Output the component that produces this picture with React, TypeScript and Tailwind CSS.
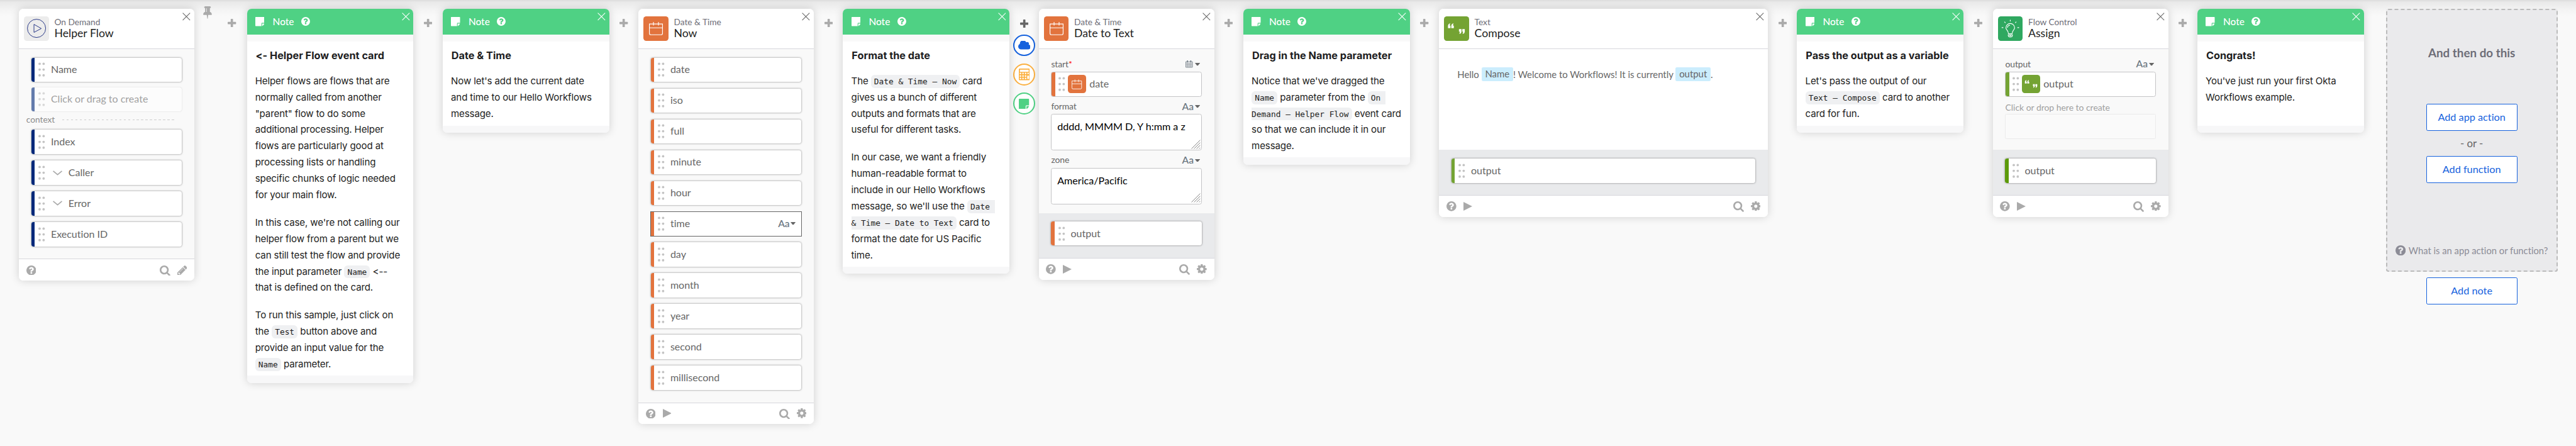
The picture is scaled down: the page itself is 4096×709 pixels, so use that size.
import type { ReactNode } from 'react';

const FA = {
  help: 'M1024 1376v-192q0-14-9-23t-23-9h-192q-14 0-23 9t-9 23v192q0 14 9 23t23 9h192q14 0 23-9t9-23zm256-672q0-88-55.5-163t-138.5-116-170-41q-243 0-371 213-15 24 8 42l132 100q7 6 19 6 16 0 25-12 53-68 86-92 34-24 86-24 48 0 85.5 26t37.5 59q0 38-20 61t-68 45q-63 28-115.5 86.5t-52.5 125.5v36q0 14 9 23t23 9h192q14 0 23-9t9-23q0-19 21.5-49.5t54.5-49.5q32-18 49-28.5t46-35 44.5-48 28-60.5 12.5-81zm384 192q0 209-103 385.5t-279.5 279.5-385.5 103-385.5-103-279.5-279.5-103-385.5 103-385.5 279.5-279.5 385.5-103 385.5 103 279.5 279.5 103 385.5z',
  search:
    'M1216 832q0-185-131.5-316.5t-316.5-131.5-316.5 131.5-131.5 316.5 131.5 316.5 316.5 131.5 316.5-131.5 131.5-316.5zm512 832q0 52-38 90t-90 38q-54 0-90-38l-343-342q-179 124-399 124-143 0-273.5-55.5t-225-150-150-225-55.5-273.5 55.5-273.5 150-225 225-150 273.5-55.5 273.5 55.5 225 150 150 225 55.5 273.5q0 220-124 399l343 343q37 37 37 90z',
  gear: 'M1152 896q0-106-75-181t-181-75-181 75-75 181 75 181 181 75 181-75 75-181zm512-109v222q0 12-8 23t-20 13l-185 28q-19 54-39 91 35 50 107 138 10 12 10 25t-9 23q-27 37-99 108t-94 71q-12 0-26-9l-138-108q-44 23-91 38-16 136-29 186-7 28-36 28h-222q-14 0-24.5-8.5t-11.5-21.5l-28-184q-49-16-90-37l-141 107q-10 9-25 9-14 0-25-11-126-114-165-168-7-10-7-23 0-12 8-23 15-21 51-66.5t54-70.5q-27-50-41-99l-183-27q-13-2-21-12.5t-8-23.5v-222q0-12 8-23t19-13l186-28q14-46 39-92-40-57-107-138-10-12-10-24 0-10 9-23 26-36 98.5-107.5t94.5-71.5q13 0 26 10l138 107q44-23 91-38 16-136 29-186 7-28 36-28h222q14 0 24.5 8.5t11.5 21.5l28 184q49 16 90 37l142-107q9-9 24-9 13 0 25 10 129 119 165 170 7 8 7 22 0 12-8 23-15 21-51 66.5t-54 70.5q26 50 41 98l183 28q13 2 21 12.5t8 23.5z',
  pin: 'M800 864v-448q0-14-9-23t-23-9-23 9-9 23v448q0 14 9 23t23 9 23-9 9-23zm672 352q0 26-19 45t-45 19h-429l-51 483q-2 12-10.5 20.5t-20.5 8.5h-1q-27 0-32-27l-76-485h-404q-26 0-45-19t-19-45q0-123 78.5-221.5t177.5-98.5v-512q-52 0-90-38t-38-90 38-90 90-38h640q52 0 90 38t38 90-38 90-90 38v512q99 0 177.5 98.5t78.5 221.5z',
  pencil:
    'M491 1536l91-91-235-235-91 91v107h128v128h107zm523-928q0-22-22-22-10 0-17 7l-542 542q-7 7-7 17 0 22 22 22 10 0 17-7l542-542q7-7 7-17zm-54-192l416 416-832 832h-416v-416zm683 96q0 53-37 90l-166 166-416-416 166-165q36-38 90-38 53 0 91 38l235 234q37 39 37 91z',
  plus: 'M1600 736v192q0 40-28 68t-68 28h-416v416q0 40-28 68t-68 28h-192q-40 0-68-28t-28-68v-416h-416q-40 0-68-28t-28-68v-192q0-40 28-68t68-28h416v-416q0-40 28-68t68-28h192q40 0 68 28t28 68v416h416q40 0 68 28t28 68z',
  cloud:
    'M1984 1152q0 159-112.5 271.5t-271.5 112.5h-1088q-185 0-316.5-131.5t-131.5-316.5q0-132 71-241.5t187-163.5q-2-28-2-43 0-212 150-362t362-150q158 0 286.5 88t187.5 230q70-62 166-62 106 0 181 75t75 181q0 75-41 138 129 30 213 134.5t84 239.5z',
};

function Glyph({ d, box = '0 0 1792 1792', className }: { d: string; box?: string; className: string }) {
  return (
    <svg viewBox={box} className={'shrink-0 ' + className} fill="currentColor">
      <path d={d} />
    </svg>
  );
}

const Help = ({ className }: { className: string }) => <Glyph d={FA.help} box="128 128 1536 1536" className={className} />;

function StickyNote({ className }: { className: string }) {
  return (
    <svg viewBox="0 0 24 24" className={'shrink-0 ' + className} fill="currentColor">
      <path d="M1.2 0H22.8Q24 0 24 1.2V15.4H18Q16 15.4 16 17.4V24H1.2Q0 24 0 22.8V1.2Q0 0 1.2 0Z" />
      <path d="M17.8 17.2H23.8Q23.4 19 22 20.6L20.6 22Q19.4 23.2 17.8 23.8Z" />
    </svg>
  );
}

function CalendarLine({ className }: { className: string }) {
  return (
    <svg viewBox="0 0 36 34" className={'shrink-0 ' + className} fill="none" stroke="#fff" strokeWidth="1.9">
      <path d="M1 5H35V29.5Q35 33 31.5 33H4.500Q1 33 1 29.5ZM1 15H35M11.500 0V9M24.500 0V9" />
    </svg>
  );
}

function CalendarGrid() {
  return (
    <svg viewBox="0 0 20 20" className="size-[10px] shrink-0" fill="none" stroke="#69757f">
      <path strokeWidth="1.400" d="M1 3.500H19V19H1Z" />
      <path strokeWidth="1" d="M1 7.500H19M1 11.300H19M1 15.200H19M5.500 7V19M10 7V19M14.500 7V19" />
      <path strokeWidth="2.400" d="M5.500 0V5.500M14.500 0V5.500" />
    </svg>
  );
}

function Quotes({ className }: { className: string }) {
  return (
    <svg viewBox="0 0 34 34" className={'shrink-0 ' + className} fill="#fff">
      <path d="M5.500 16.200V12.600Q5.800 10.300 7.900 9.600L8.600 10Q7.700 11.400 7.900 12.800H8.900V16.200ZM10 16.200V12.600Q10.300 10.300 12.400 9.600L13.100 10Q12.200 11.400 12.400 12.800H13.500V16.200Z" />
      <path d="M28.500 17.400V21Q28.200 23.300 26.100 24L25.400 23.600Q26.300 22.200 26.100 20.800H25.100V17.400ZM24 17.400V21Q23.700 23.300 21.600 24L20.900 23.600Q21.800 22.200 21.600 20.800H20.500V17.400Z" />
    </svg>
  );
}

function Bulb() {
  return (
    <svg viewBox="0 0 34 34" className="size-[34px] shrink-0" fill="none" stroke="#fff" strokeWidth="1" strokeLinecap="butt">
      <path d="M14.200 23.700Q14 20.900 12.300 18.900Q10.800 17.400 10.800 15.800A5.950 5.950 0 0 1 22.700 15.800Q22.700 17.400 21.200 18.900Q19.500 20.900 19.300 23.700Z" />
      <path d="M12.800 15.600Q13 12.600 16.300 12.200" />
      <path d="M14 25.300H19.600V26.500Q19.600 28.100 18 28.100H15.600Q14 28.100 14 26.500ZM15.500 26.500H18" />
      <path d="M16.750 4.700V6.900M8.700 7.400L10.200 8.900M25 7.400L23.500 8.900M5 15.400H7.200M26.500 15.400H28.800" />
    </svg>
  );
}

function Close({ className }: { className: string }) {
  return (
    <svg viewBox="0 0 11 11" className={'absolute right-[5px] top-[5px] size-[11px] ' + className} fill="none" stroke="currentColor" strokeWidth="0.9">
      <path d="M0.500 0.500L10.500 10.500M10.500 0.500L0.500 10.500" />
    </svg>
  );
}

function Handle() {
  return (
    <svg viewBox="0 0 9 20" className="h-[20px] w-[9px] shrink-0" fill="#c4c4c4">
      {[2.1, 10, 17.9].map((y) => (
        <g key={y}>
          <circle cx="1.700" cy={y} r="1.650" />
          <circle cx="7.200" cy={y} r="1.650" />
        </g>
      ))}
    </svg>
  );
}

function TypeTag({ date = false }: { date?: boolean }) {
  return (
    <span className="flex items-center gap-[1.5px]">
      {date ? <span className="mr-[1px] flex"><CalendarGrid /></span> : <span className="text-[13.5px] font-medium text-[#69757f]">Aa</span>}
      <svg viewBox="0 0 14 8" className="h-[4px] w-[7px]" fill="#666">
        <path d="M0 0H14L9 6.500Q7 8.500 5 6.500Z" />
      </svg>
    </span>
  );
}

function Card({ width, children }: { width: string; children: ReactNode }) {
  return (
    <section className={'relative flex shrink-0 flex-col overflow-clip rounded-[6px] bg-[#f9f9f9] shadow-[0_0_12px_rgba(0,0,0,0.17)] ' + width}>
      {children}
    </section>
  );
}

function Header({ icon, tint, app, name }: { icon: ReactNode; tint: string; app: string; name: string }) {
  return (
    <header className="flex h-[55px] items-start border-b border-[#d7d7dc] bg-white pl-[7px] pt-[10px]">
      <div className={'flex size-[34px] items-center justify-center rounded-[4px] ' + tint}>{icon}</div>
      <div className="ml-[7.500px] flex flex-col whitespace-nowrap">
        <span className="h-[15px] text-[11.800px] leading-[15px] text-[#6e6e78]">{app}</span>
        <span className="text-[15.200px] leading-[18px] text-[#1d1d21]">{name}</span>
      </div>
      <Close className="text-[#666]" />
    </header>
  );
}

function Footer({ edit = false }: { edit?: boolean }) {
  return (
    <footer className="flex h-[30px] items-center border-t border-[#d7d7dc] bg-white pl-[10px] pr-[10px] text-[#aaa]">
      <Help className="size-[13.500px]" />
      {!edit && (
        <svg viewBox="0 0 12 12" className="ml-[9.500px] size-[12px]" fill="currentColor">
          <path d="M0 0L12 6L0 12Z" />
        </svg>
      )}
      <Glyph d={FA.search} box="64 128 1664 1664" className="ml-auto mt-[1px] size-[14.500px]" />
      {edit ? (
        <Glyph d={FA.pencil} box="128 149 1515 1515" className="ml-[9.500px] size-[13.500px]" />
      ) : (
        <Glyph d={FA.gear} box="128 128 1536 1536" className="ml-[9.500px] mt-[-1px] size-[13.500px]" />
      )}
    </footer>
  );
}

type RowProps = { label: string; bar: string; expand?: boolean; active?: boolean; ghost?: boolean };

function Row({ label, bar, expand, active, ghost }: RowProps) {
  return (
    <div
      className={
        'flex h-[33.150px] w-full items-center overflow-clip bg-white ' +
        (active
          ? 'outline outline-1 outline-[#666] '
          : ghost
            ? 'rounded-[3px] opacity-60 shadow-[0_0_1.500px_rgba(0,0,0,0.3)] '
            : 'rounded-[3px] shadow-[0_0_2.500px_rgba(0,0,0,0.5)] ')
      }
    >
      <div className={'h-full w-[4.700px] shrink-0 ' + bar} />
      <div className="ml-[5px] flex">
        <Handle />
      </div>
      {expand && (
        <svg viewBox="0 0 13 7" className="ml-[10.500px] mr-[0.500px] h-[7px] w-[13px]" fill="none" stroke="#aaa" strokeWidth="1.500">
          <path d="M0.500 0.700L6.500 5.800L12.500 0.700" />
        </svg>
      )}
      <span className="ml-[8px] flex-1 whitespace-nowrap pb-[1px] text-[13.800px] text-[#666]">{label}</span>
      {active && <div className="mr-[7.500px]"><TypeTag /></div>}
    </div>
  );
}

function FieldLabel({ children, date }: { children: ReactNode; date?: boolean }) {
  return (
    <div className="flex h-[20px] items-center justify-between pr-[2.500px]">
      <span className="text-[12px] tracking-[-0.100px] text-[#666]">{children}</span>
      <TypeTag date={date} />
    </div>
  );
}

function Chip({ bar, tint, icon, label }: { bar: string; tint: string; icon: ReactNode; label: string }) {
  return (
    <div className="flex h-[34.500px] items-center overflow-clip rounded-[3px] border border-[#c4c4c6] bg-white">
      <div className={'h-full w-[4.500px] shrink-0 ' + bar} />
      <div className="ml-[5px] flex">
        <Handle />
      </div>
      <div className={'ml-[3.500px] flex size-[25px] items-center justify-center rounded-[4px] ' + tint}>{icon}</div>
      <span className="ml-[4.500px] pb-[1px] text-[13.800px] text-[#666]">{label}</span>
    </div>
  );
}

function TextArea({ value }: { value: string }) {
  return (
    <div className="relative h-[50px] rounded-[3px] border border-[#c4c4c6] bg-white pl-[7.500px] pt-[8px] text-[13.900px] leading-[17px] text-black">
      {value}
      <svg viewBox="0 0 13 13" className="absolute bottom-[1px] right-[1px] size-[13px]" fill="none" stroke="#666" strokeWidth="0.7">
        <path d="M0.500 12.500L12.500 0.500M4 12.500L12.500 4M7.500 12.500L12.500 7.500M11 12.500L12.500 11" />
      </svg>
    </div>
  );
}

function Code({ children, open = 'both' }: { children: ReactNode; open?: 'both' | 'start' | 'end' }) {
  const edge = { both: 'rounded-[5px] px-[4.400px]', start: 'rounded-l-[5px] pl-[4.400px]', end: 'rounded-r-[5px] pr-[4.400px]' }[open];
  return (
    <code className={"whitespace-pre bg-[#eff0f2] py-[2.500px] font-['DejaVu_Sans_Mono',monospace] text-[11.050px] leading-[13px] tracking-normal " + edge}>
      {children}
    </code>
  );
}

function Note({ title, body }: { title: string; body: ReactNode[][] }) {
  return (
    <Card width="w-[228px] font-['Inter',sans-serif]">
      <header className="flex h-[35px] items-center bg-[#4fd184] pl-[11.300px] text-white">
        <StickyNote className="size-[12.500px]" />
        <span className="ml-[11.500px] w-[31px] font-['Lato',sans-serif] text-[13.300px] font-medium">Note</span>
        <Help className="ml-[8px] size-[12px]" />
        <Close className="text-white" />
      </header>
      <div className="mt-[10px] min-h-[115px] bg-white px-[11.300px] pb-[4.400px] pt-[9px] text-[#1d1d21]">
        <h3 className="ml-[0.700px] h-[33.700px] whitespace-nowrap text-[14px] font-bold leading-[20px]">{title}</h3>
        <div className="flex flex-col gap-[15.600px] text-[13px] leading-[22.286px] tracking-[-0.120px]">
          {body.map((lines, i) => (
            <p key={i}>
              {lines.map((line, j) => (
                <span key={j} className="block h-[22.286px] whitespace-nowrap">
                  {line}
                </span>
              ))}
            </p>
          ))}
        </div>
      </div>
      <div className="h-[10px] bg-[#f7f7f8]" />
    </Card>
  );
}

function Plus({ dark = false }: { dark?: boolean }) {
  return <Glyph d={FA.plus} box="192 128 1408 1408" className={'size-[11.500px] ' + (dark ? 'text-[#666]' : 'text-[#aaa]')} />;
}

const Gap = () => (
  <div className="flex w-[40px] shrink-0 justify-center pt-[13.500px]">
    <Plus />
  </div>
);

function InsertMenu() {
  const ring = 'flex size-[30px] items-center justify-center rounded-full border-2 bg-white ';
  return (
    <div className="flex w-[40px] shrink-0 flex-col items-center pt-[14.500px]">
      <Plus dark />
      <div className="mt-[9px] flex flex-col gap-[10px]">
        <div className={ring + 'border-[#1662dd] text-[#1662dd]'}>
          <Glyph d={FA.cloud} box="64 256 1920 1280" className="h-[12px] w-[17px]" />
        </div>
        <div className={ring + 'border-[#fbb040] text-[#fbb040]'}>
          <svg viewBox="0 0 30 32" className="h-[16px] w-[15px]" fill="currentColor">
            <path
              fillRule="evenodd"
              d="M2 0H28Q30 0 30 2V30Q30 32 28 32H2Q0 32 0 30V2Q0 0 2 0ZM3 3V9H27V3ZM25.500 19Q23 19 23 21V27Q23 29 25.500 29Q28 29 28 27V21Q28 19 25.500 19Z"
            />
            <g fill="#fff">
              {[13.5, 20.5, 27.2].map((y) =>
                [4.5, 11.5, 18.5].map((x) => <circle key={`${x}-${y}`} cx={x} cy={y} r="2.200" />),
              )}
              <circle cx="25.500" cy="13.500" r="2.200" />
            </g>
          </svg>
        </div>
        <div className={ring + 'border-[#4fd184] text-[#4fd184]'}>
          <StickyNote className="size-[14px]" />
        </div>
      </div>
    </div>
  );
}

function Action({ children }: { children: ReactNode }) {
  return (
    <button className="flex h-[37px] w-[125px] items-center justify-center rounded-[2px] border border-[#1662dd] bg-white pb-[1px] text-[14px] text-[#1662dd]">
      {children}
    </button>
  );
}

const NAVY = 'bg-[#00297a]';
const ORANGE = 'bg-[#e2733d]';
const GREEN = 'bg-[#74a333]';
const TOKEN = 'h-[19.400px] rounded-[2px] bg-[#cbedfd] px-[5px] leading-[17.800px]';

export default function App() {
  return (
    <div className="h-[709px] w-full overflow-clip bg-[#f9f9f9] font-['Lato',sans-serif] [font-variant-ligatures:none]">
      <div className="relative h-[610.300px] w-[3526px] [zoom:1.1616]">
        <div className="absolute inset-x-0 top-0 h-[22px] bg-[linear-gradient(#dcdcdc_0,#e9e9e9_3px,#eeeeee_8px,#f5f5f5_15px,#f9f9f9_22px)]" />
        <main className="relative flex items-start pl-[26px] pt-[12px]">
          <Card width="w-[240px]">
            <Header
              app="On Demand"
              name="Helper Flow"
              tint="bg-[#ececec]"
              icon={
                <svg viewBox="0 0 26 26" className="size-[26px]" fill="none" stroke="#1a2b80" strokeWidth="0.8">
                  <circle cx="13" cy="13" r="12.500" />
                  <path d="M9.500 7.500L19.500 13.200L9.500 18.500Z" />
                </svg>
              }
            />
            <div className="flex flex-col px-[17px] pb-[17px] pt-[12px]">
              <Row label="Name" bar={NAVY} />
              <div className="mt-[7.200px]">
                <Row label="Click or drag to create" bar={NAVY} ghost />
              </div>
              <div className="ml-[-7px] mr-[9px] flex h-[25.200px] items-center text-[11.800px] text-[#8c8c8c]">
                <span className="pb-[3px]">context</span>
                <span className="ml-[10px] mt-[-2px] h-px flex-1 bg-[repeating-linear-gradient(90deg,#ccc_0_3px,transparent_3px_6px)]" />
              </div>
              <div className="flex flex-col gap-[9px]">
                <Row label="Index" bar={NAVY} />
                <Row label="Caller" bar={NAVY} expand />
                <Row label="Error" bar={NAVY} expand />
                <Row label="Execution ID" bar={NAVY} />
              </div>
            </div>
            <Footer edit />
          </Card>

          <div className="flex w-[72px] shrink-0 items-start">
            <Glyph d={FA.pin} box="320 128 1152 1664" className="ml-[12.500px] mt-[-3px] h-[17px] w-[12px] text-[#aaa]" />
            <div className="ml-[21.500px] mt-[13.500px] flex">
              <Plus />
            </div>
          </div>

          <Note
            title="<- Helper Flow event card"
            body={[
              [
                'Helper flows are flows that are',
                'normally called from another',
                '"parent" flow to do some',
                'additional processing. Helper',
                'flows are particularly good at',
                'processing lists or handling',
                'specific chunks of logic needed',
                'for your main flow.',
              ],
              [
                "In this case, we're not calling our",
                'helper flow from a parent but we',
                'can still test the flow and provide',
                <>the input parameter <Code>Name</Code> &lt;--</>,
                'that is defined on the card.',
              ],
              [
                'To run this sample, just click on',
                <>the <Code>Test</Code> button above and</>,
                'provide an input value for the',
                <><Code>Name</Code> parameter.</>,
              ],
            ]}
          />
          <Gap />
          <Note title="Date & Time" body={[["Now let's add the current date", 'and time to our Hello Workflows', 'message.']]} />
          <Gap />

          <Card width="w-[240px]">
            <Header app="Date & Time" name="Now" tint={ORANGE} icon={<CalendarLine className="h-[18px] w-[19px]" />} />
            <div className="flex flex-col gap-[9px] px-[17px] pb-[17px] pt-[12px]">
              {['date', 'iso', 'full', 'minute', 'hour', 'time', 'day', 'month', 'year', 'second', 'millisecond'].map((f) => (
                <Row key={f} label={f} bar={ORANGE} active={f === 'time'} />
              ))}
            </div>
            <Footer />
          </Card>
          <Gap />

          <Note
            title="Format the date"
            body={[
              [
                <>The <Code>Date &amp; Time – Now</Code> card</>,
                'gives us a bunch of different',
                'outputs and formats that are',
                'useful for different tasks.',
              ],
              [
                'In our case, we want a friendly',
                'human-readable format to',
                'include in our Hello Workflows',
                <>message, so we'll use the <Code open="start">{'Date '}</Code></>,
                <><Code open="end">&amp; Time – Date to Text</Code> card to</>,
                'format the date for US Pacific',
                'time.',
              ],
            ]}
          />
          <InsertMenu />

          <Card width="w-[240px]">
            <Header app="Date & Time" name="Date to Text" tint={ORANGE} icon={<CalendarLine className="h-[18px] w-[19px]" />} />
            <div className="flex flex-col px-[17px] pb-[12px] pt-[11px]">
              <FieldLabel date>
                start<span className="text-[#f00]">*</span>
              </FieldLabel>
              <Chip bar={ORANGE} tint={ORANGE} icon={<CalendarLine className="h-[14px] w-[14px]" />} label="date" />
              <div className="mt-[3.500px]">
                <FieldLabel>format</FieldLabel>
                <TextArea value="dddd, MMMM D, Y h:mm a z" />
              </div>
              <div className="mt-[3.500px]">
                <FieldLabel>zone</FieldLabel>
                <TextArea value="America/Pacific" />
              </div>
            </div>
            <div className="bg-[#e9eaec] px-[17px] pb-[17px] pt-[11.500px]">
              <Row label="output" bar={ORANGE} />
            </div>
            <Footer />
          </Card>
          <Gap />

          <Note
            title="Drag in the Name parameter"
            body={[
              [
                "Notice that we've dragged the",
                <><Code>Name</Code> parameter from the <Code open="start">{'On '}</Code></>,
                <><Code open="end">Demand – Helper Flow</Code> event card</>,
                'so that we can include it in our',
                'message.',
              ],
            ]}
          />
          <Gap />

          <Card width="w-[450px]">
            <Header app="Text" name="Compose" tint={GREEN} icon={<Quotes className="size-[34px]" />} />
            <div className="flex h-[138px] items-start whitespace-pre bg-white pl-[25px] pt-[25px] text-[12.850px] leading-[20px] text-[#666]">
              <span>Hello </span>
              <span className={TOKEN}>Name</span>
              <span>! Welcome to Workflows! It is currently </span>
              <span className={TOKEN}>output</span>
              <span>.</span>
            </div>
            <div className="bg-[#e9eaec] px-[17px] pb-[17px] pt-[12px]">
              <Row label="output" bar={GREEN} />
            </div>
            <Footer />
          </Card>
          <Gap />

          <Note
            title="Pass the output as a variable"
            body={[["Let's pass the output of our", <><Code>Text – Compose</Code> card to another</>, 'card for fun.']]}
          />
          <Gap />

          <Card width="w-[240px]">
            <Header app="Flow Control" name="Assign" tint="bg-[#2fa860]" icon={<Bulb />} />
            <div className="flex h-[138px] flex-col px-[17px] pt-[11px]">
              <FieldLabel>output</FieldLabel>
              <Chip bar={GREEN} tint={GREEN} icon={<Quotes className="size-[25px]" />} label="output" />
              <div className="mt-[4px] h-[19.500px] text-[12px] leading-[20px] text-[#a0a0a0]">Click or drop here to create</div>
              <div className="h-[34.700px] rounded-[2px] border border-[#ebebeb] bg-[#fafafa]" />
            </div>
            <div className="bg-[#e9eaec] px-[17px] pb-[17px] pt-[12px]">
              <Row label="output" bar="bg-[#5c9a0a]" />
            </div>
            <Footer />
          </Card>
          <Gap />

          <Note title="Congrats!" body={[["You've just run your first Okta", 'Workflows example.']]} />

          <div className="ml-[30px] flex w-[235px] shrink-0 flex-col items-center">
            <div className="flex h-[360px] w-full flex-col items-center rounded-[3px] border-2 border-dashed border-[#bbb] bg-[#eaeaec]">
              <h2 className="mt-[48px] h-[20px] text-[16.200px] font-bold leading-[20px] text-[#6e6e78]">And then do this</h2>
              <div className="mt-[60.500px]">
                <Action>Add app action</Action>
              </div>
              <span className="h-[34.500px] text-[14.500px] leading-[34px] text-[#666]">- or -</span>
              <Action>Add function</Action>
              <div className="mt-[84px] flex h-[16px] items-center gap-[4px] whitespace-nowrap text-[12.700px] text-[#8c8c96]">
                <Help className="size-[14px]" />
                What is an app action or function?
              </div>
            </div>
            <div className="mt-[8px]">
              <Action>Add note</Action>
            </div>
          </div>
        </main>
      </div>
    </div>
  );
}
